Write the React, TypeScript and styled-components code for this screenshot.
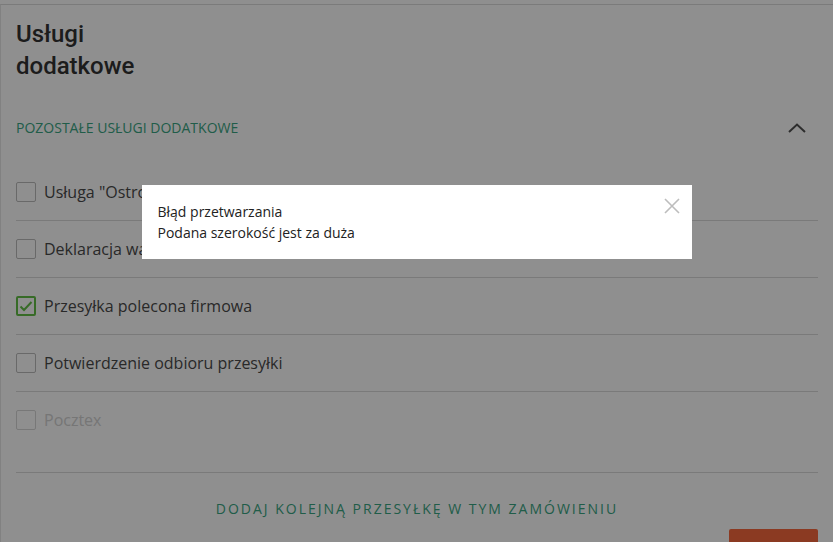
import React from "react";
import styled, { createGlobalStyle } from "styled-components";

const services = [
  { label: 'Usługa "Ostrożnie"', checked: false, disabled: false },
  { label: "Deklaracja wartości", checked: false, disabled: false },
  { label: "Przesyłka polecona firmowa", checked: true, disabled: false },
  { label: "Potwierdzenie odbioru przesyłki", checked: false, disabled: false },
  { label: "Pocztex", checked: false, disabled: true },
];

const App: React.FC = () => {
  return (
    <>
      <GlobalStyle />
      <Page>
        <Card>
          <Title>Usługi dodatkowe</Title>
          <SectionHeader>
            <SectionTitle>Pozostałe usługi dodatkowe</SectionTitle>
            <svg width="18" height="10" viewBox="0 0 18 10">
              <polyline points="1,9 9,1.5 17,9" fill="none" stroke="#505050" strokeWidth="2" />
            </svg>
          </SectionHeader>
          <List>
            {services.map((s) => (
              <Row key={s.label}>
                <Box $checked={s.checked} $disabled={s.disabled}>
                  {s.checked && (
                    <svg width="14" height="12" viewBox="0 0 14 12">
                      <polyline points="1.5,6.5 5,10 12.5,2" fill="none" stroke="#62bf46" strokeWidth="2" />
                    </svg>
                  )}
                </Box>
                <Label $disabled={s.disabled}>{s.label}</Label>
              </Row>
            ))}
          </List>
          <Footer>
            <AddLink>Dodaj kolejną przesyłkę w tym zamówieniu</AddLink>
            <Actions>
              <NextButton aria-label="Dalej" />
            </Actions>
          </Footer>
        </Card>
      </Page>
      <Overlay />
      <Dialog>
        <DialogText>Błąd przetwarzania</DialogText>
        <DialogText>Podana szerokość jest za duża</DialogText>
        <CloseButton aria-label="Zamknij">
          <svg width="16" height="16" viewBox="0 0 16 16">
            <path d="M1 1L15 15M15 1L1 15" stroke="#bdbdbd" strokeWidth="1.6" fill="none" />
          </svg>
        </CloseButton>
      </Dialog>
    </>
  );
};

const GlobalStyle = createGlobalStyle`
  html, body {
    margin: 0;
    padding: 0;
    background: #fff;
    overflow: hidden;
  }
  body {
    font-family: "Open Sans", "Liberation Sans", sans-serif;
  }
`;

const Page = styled.div`
  padding-top: 4px;
  width: 833px;
`;

const Card = styled.div`
  border-top: 1px solid #dcdcdc;
  border-left: 1px solid #e6e6e6;
  padding: 13px 15px 0 15px;
`;

const Title = styled.h2`
  margin: 0;
  max-width: 150px;
  font-family: Roboto, "Liberation Sans", sans-serif;
  font-weight: 500;
  font-size: 24px;
  line-height: 32px;
  color: #333;
`;

const SectionHeader = styled.div`
  display: flex;
  align-items: center;
  justify-content: space-between;
  padding: 36px 12px 26px 0;
`;

const SectionTitle = styled.div`
  font-size: 14px;
  line-height: 20px;
  text-transform: uppercase;
  color: #3aa683;
`;

const List = styled.div`
  display: flex;
  flex-direction: column;
`;

const Row = styled.label`
  display: flex;
  align-items: center;
  gap: 8px;
  height: 56px;
  border-bottom: 1px solid #dadada;

  &:last-child {
    border-bottom: none;
  }
`;

const Box = styled.span<{ $checked: boolean; $disabled: boolean }>`
  box-sizing: border-box;
  width: 20px;
  height: 20px;
  border-radius: 2px;
  display: flex;
  align-items: center;
  justify-content: center;
  border: ${(p) => (p.$checked ? "2px solid #62bf46" : p.$disabled ? "1px solid #d6d6d6" : "1px solid #bcbcbc")};
  background: #fff;
`;

const Label = styled.span<{ $disabled: boolean }>`
  font-size: 16px;
  color: ${(p) => (p.$disabled ? "#d2d2d2" : "#4a4a4a")};
`;

const Footer = styled.div`
  margin-top: 24px;
  border-top: 1px solid #dadada;
  padding-top: 26px;
`;

const AddLink = styled.div`
  text-align: center;
  font-size: 14px;
  line-height: 20px;
  letter-spacing: 2px;
  text-transform: uppercase;
  color: #3aa683;
`;

const Actions = styled.div`
  display: flex;
  justify-content: flex-end;
  padding-top: 10px;
`;

const NextButton = styled.button`
  width: 89px;
  height: 46px;
  border: none;
  border-radius: 2px;
  background: #f8683d;
`;

const Overlay = styled.div`
  position: fixed;
  inset: 0;
  background: rgba(0, 0, 0, 0.44);
`;

const Dialog = styled.div`
  position: fixed;
  top: 185px;
  left: 50%;
  transform: translateX(-50%);
  width: 550px;
  box-sizing: border-box;
  padding: 16px;
  background: #fff;
`;

const DialogText = styled.div`
  font-size: 14px;
  line-height: 21px;
  color: #222;
`;

const CloseButton = styled.button`
  position: absolute;
  top: 13px;
  right: 12px;
  padding: 0;
  border: none;
  background: none;
  display: flex;
`;

export default App;
